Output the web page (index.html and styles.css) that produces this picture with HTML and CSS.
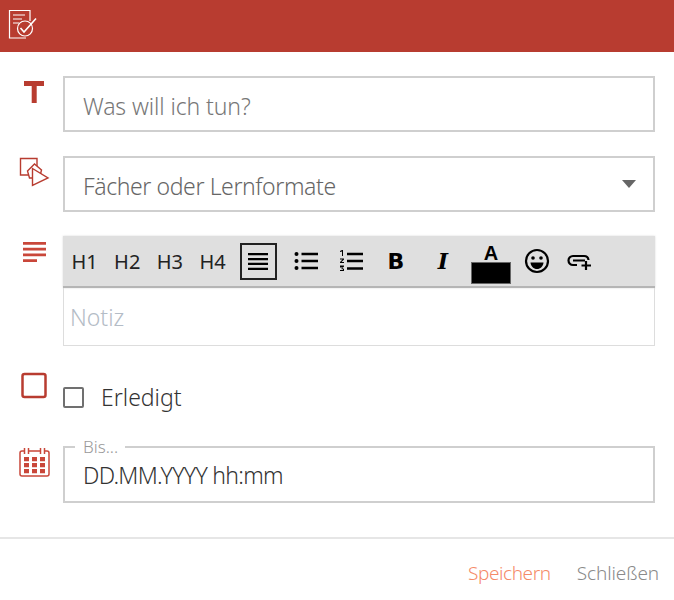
FILE: index.html
```html
<!DOCTYPE html>
<html lang="de">
<head>
<meta charset="UTF-8">
<meta name="viewport" content="width=device-width, initial-scale=1.0">
<title>Aufgabe</title>
<link rel="stylesheet" href="styles.css">
</head>
<body>
<header class="topbar">
  <svg class="topbar-icon" width="32" height="32" viewBox="0 0 32 32" fill="none" stroke="#fff" stroke-width="1.200">
    <path d="M22 12V1.500H1.500V29H18"/>
    <path d="M5 6h12M5 10h9M5 14h6" stroke-width="1"/>
    <circle cx="17" cy="19.500" r="7.500" fill="#b83c30"/>
    <path d="M12.500 19l3.500 4 12-13.500" stroke-width="1.600"/>
  </svg>
</header>

<main class="form">
  <div class="row">
    <svg class="row-icon" width="34" height="34" viewBox="0 0 34 34"><path fill="#b83c30" d="M7 5h20v5h-7.300v17h-5V10H7z"/></svg>
    <div class="field"><span class="placeholder">Was will ich tun?</span></div>
  </div>

  <div class="row">
    <svg class="row-icon" width="34" height="34" viewBox="0 0 34 34" fill="none" stroke="#b83c30" stroke-width="1.400">
      <path d="M3.500 2.500h16.500v16.500H3.500z"/>
      <path d="M10.500 15l7-7 7 6-2 8h-10z" fill="#fff"/>
      <path d="M15.500 12.500l15.500 9.500-15.500 7.500z" fill="#fff"/>
    </svg>
    <div class="field">
      <span class="placeholder placeholder-dark">Fächer oder Lernformate</span>
      <span class="caret"></span>
    </div>
  </div>

  <div class="row">
    <svg class="row-icon" width="34" height="34" viewBox="0 0 34 34" fill="#c9473a">
      <path d="M6 6h23v2.700H6zM6 11.800h23v2.700H6zM6 17.500h23v2.700H6zM6 23.300h14v2.700H6z"/>
    </svg>
    <div class="editor">
      <div class="toolbar">
        <span class="tool tool-text">H1</span>
        <span class="tool tool-text">H2</span>
        <span class="tool tool-text">H3</span>
        <span class="tool tool-text">H4</span>
        <span class="tool tool-active">
          <svg width="20" height="17" viewBox="0 0 20 17" fill="#000"><path d="M0 0h20v2.300H0zM0 4.900h20v2.300H0zM0 9.800h20v2.300H0zM0 14.700h20v2.300H0z"/></svg>
        </span>
        <span class="tool tool-list">
          <svg width="24" height="20" viewBox="0 0 24 20" fill="#000"><circle cx="2.500" cy="3" r="2"/><circle cx="2.500" cy="10" r="2"/><circle cx="2.500" cy="17" r="2"/><path d="M7.500 1.800H24v2.400H7.500zM7.500 8.800H24v2.400H7.500zM7.500 15.800H24v2.400H7.500z"/></svg>
        </span>
        <span class="tool tool-list">
          <svg width="24" height="22" viewBox="0 0 24 22" fill="#000"><path d="M1 1l2-1h1v6H3V1.500L1 2zM1 8.500h4v1L2.500 12H5v1H1v-1l2.500-2.500H1zM1 15.500h4v1L3.500 18 5 19v2H1v-1h3v-.7H2.500v-1H4v-.8H1z"/><path d="M8 2.800h16v2.400H8zM8 9.800h16v2.400H8zM8 17.300h16v2.400H8z"/></svg>
        </span>
        <span class="tool tool-bold">B</span>
        <span class="tool tool-italic">I</span>
        <span class="tool tool-color"><span class="color-letter">A</span><span class="color-swatch"></span></span>
        <span class="tool tool-emoji">
          <svg width="26" height="26" viewBox="0 0 26 26"><circle cx="13" cy="13" r="11" fill="none" stroke="#000" stroke-width="2.200"/><circle cx="9" cy="10" r="1.800"/><circle cx="17" cy="10" r="1.800"/><path d="M6.500 14.500h13c-.5 4-3 6.500-6.500 6.500s-6-2.500-6.500-6.500z"/></svg>
        </span>
        <span class="tool tool-link">
          <svg width="26" height="20" viewBox="0 0 26 20" fill="none" stroke="#000" stroke-width="2.200"><path d="M10 14H6a4.500 4.500 0 0 1 0-9h11a4.500 4.500 0 0 1 4.500 4"/><path d="M6 9.500h12M19 10v9M14.500 14.500H24"/></svg>
        </span>
      </div>
      <div class="editor-body"><span class="editor-placeholder">Notiz</span></div>
    </div>
  </div>

  <div class="row row-check">
    <svg class="row-icon" width="34" height="34" viewBox="0 0 34 34" fill="none" stroke="#b83c30" stroke-width="2.500"><rect x="5.500" y="2" width="23" height="23" rx="2"/></svg>
    <label class="check"><span class="check-box"></span>Erledigt</label>
  </div>

  <div class="row row-date">
    <svg class="row-icon row-icon-date" width="34" height="34" viewBox="0 0 34 34" fill="#c9473a">
      <path fill="none" stroke="#c9473a" stroke-width="1.500" d="M8 5H5.500a2 2 0 0 0-2 2v21a2 2 0 0 0 2 2h25a2 2 0 0 0 2-2V7a2 2 0 0 0-2-2H28M12 5h12M8 2v6M12 2v6M24 2v6M28 2v6" transform="translate(-.500)"/>
      <path d="M7 11h5v4.200H7zM15 11h5v4.200h-5zM23 11h5v4.200h-5zM7 17h5v4.200H7zM15 17h5v4.200h-5zM23 17h5v4.200h-5zM7 23h5v4.200H7zM15 23h5v4.200h-5zM23 23h5v4.200h-5z"/>
    </svg>
    <fieldset class="date-field">
      <legend>Bis...</legend>
      <span class="date-value">DD.MM.YYYY hh:mm</span>
    </fieldset>
  </div>
</main>

<footer class="actions">
  <a class="action action-save">Speichern</a>
  <a class="action action-close">Schließen</a>
</footer>
</body>
</html>
```

FILE: styles.css
```css
body {
  margin: 0;
  font-family: "Noto Sans", "Open Sans", sans-serif;
  font-weight: 300;
  background-color: #fff;
  color: #333;
}
.topbar {
  height: 52px;
  background-color: #b83c30;
  padding: 9px 0 0 8px;
  box-sizing: border-box;
}
.topbar-icon {
  display: block;
}
.form {
  padding: 24px 19px 0 17px;
}
.row {
  display: flex;
  align-items: flex-start;
  margin-bottom: 24px;
}
.row-icon {
  flex: none;
  width: 34px;
  height: 34px;
  margin: 0 12px 0 0;
}
.row-icon-date {
  margin-top: 9px;
}
.field {
  flex: 1;
  height: 56px;
  box-sizing: border-box;
  border: 2px solid #cfcfcf;
  padding: 3px 18px 0;
  display: flex;
  align-items: center;
  justify-content: space-between;
}
.placeholder {
  font-size: 23px;
  letter-spacing: -0.1px;
  color: #777;
}
.placeholder-dark {
  letter-spacing: -0.4px;
  color: #666;
}
.caret {
  width: 0;
  height: 0;
  margin: -3px -1px 0 0;
  border-left: 7.5px solid transparent;
  border-right: 7.5px solid transparent;
  border-top: 8px solid #666;
}
.editor {
  flex: 1;
}
.toolbar {
  height: 52px;
  box-sizing: border-box;
  background-color: #dfdfdf;
  border-bottom: 2px solid #b5b5b5;
  display: flex;
  align-items: center;
  padding-left: 9px;
  box-shadow: 0 0 2px rgba(0, 0, 0, 0.15);
}
.tool {
  display: flex;
  align-items: center;
  justify-content: center;
  color: #222;
}
.tool-text {
  width: 25px;
  margin-right: 17.7px;
  font-size: 20px;
  font-weight: 400;
}
.tool-active {
  width: 37px;
  height: 37px;
  box-sizing: border-box;
  border: 2px solid #222;
  margin: 0 17px 0 -2.800px;
}
.tool-list {
  width: 24px;
  margin-right: 21px;
}
.tool-bold,
.tool-italic {
  width: 20px;
  font-size: 22px;
  font-weight: 700;
  color: #000;
}
.tool-bold {
  font-family: "DejaVu Sans", sans-serif;
  margin: 0 22px 0 2px;
}
.tool-italic {
  font-family: "DejaVu Serif", serif;
  font-style: italic;
  margin: 0 18px 0 5px;
}
.tool-color {
  width: 40px;
  height: 50px;
  flex-direction: column;
  margin-right: 13px;
}
.color-letter {
  font-family: "Liberation Sans", sans-serif;
  font-size: 20px;
  font-weight: 700;
  color: #000;
  line-height: 16px;
  margin-top: 6px;
}
.color-swatch {
  display: block;
  width: 40px;
  height: 22px;
  margin-top: 1px;
  box-sizing: border-box;
  background-color: #000;
  border: 1px solid #666;
}
.tool-emoji {
  width: 26px;
  margin-right: 17px;
}
.tool-link {
  width: 26px;
}
.editor-body {
  height: 58px;
  box-sizing: border-box;
  border: 1px solid #ddd;
  border-top: none;
  padding: 0 6px;
  display: flex;
  align-items: center;
}
.editor-placeholder {
  font-size: 23px;
  color: #b4bcc6;
}
.row-check {
  margin: 26px 0 0;
  height: 65px;
}
.check {
  display: flex;
  align-items: center;
  font-size: 23px;
  color: #333;
  margin-top: 9px;
}
.check-box {
  width: 21px;
  height: 21px;
  box-sizing: border-box;
  border: 2.500px solid #707070;
  border-radius: 2px;
  margin: 0 17px 0 0;
}
.row-date {
  margin-bottom: 0;
}
.date-field {
  flex: 1;
  min-width: 0;
  height: 66px;
  box-sizing: border-box;
  border: 2px solid #cfcfcf;
  margin: 0;
  padding: 0 18px;
}
.date-field legend {
  font-size: 17px;
  color: #999;
  padding: 0 7px 0 8px;
  margin-left: -8px;
  line-height: 20px;
}
.date-value {
  font-size: 23px;
  letter-spacing: -0.7px;
  line-height: 36px;
  color: #333;
  display: block;
}
.actions {
  margin-top: 34px;
  border-top: 2px solid #e6e6e6;
  display: flex;
  justify-content: flex-end;
  gap: 26px;
  padding: 21px 15px 0 0;
}
.action {
  font-size: 19px;
}
.action-save {
  color: #f58a68;
  letter-spacing: -0.4px;
}
.action-close {
  color: #8a8a8a;
  letter-spacing: -0.1px;
}
```
